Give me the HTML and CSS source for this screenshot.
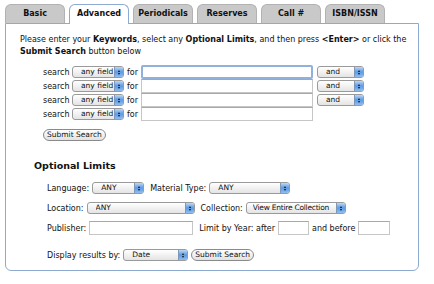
FILE: index.html
```html
<!DOCTYPE html>
<html lang="en">
<head>
    <meta charset="UTF-8">
    <title>Advanced Search</title>
    <link rel="stylesheet" href="styles.css">
</head>
<body>
    <div class="search-box">
        <ul class="tabs">
            <li><a href="#">Basic</a></li>
            <li class="active"><a href="#">Advanced</a></li>
            <li><a href="#">Periodicals</a></li>
            <li><a href="#">Reserves</a></li>
            <li><a href="#">Call #</a></li>
            <li><a href="#">ISBN/ISSN</a></li>
        </ul>

        <div class="panel">
            <p class="intro">Please enter your <b>Keywords</b>, select any <b>Optional Limits</b>, and then press <b>&lt;Enter&gt;</b> or click the <b>Submit Search</b> button below</p>

            <div class="keywords">
                <div class="kw-row">
                    <span>search</span>
                    <span class="sel w52"><select><option>any field</option></select><i class="cap"></i></span>
                    <span>for</span>
                    <input type="text" class="kw-input focus">
                    <span class="sel w47"><select><option>and</option></select><i class="cap"></i></span>
                </div>
                <div class="kw-row">
                    <span>search</span>
                    <span class="sel w52"><select><option>any field</option></select><i class="cap"></i></span>
                    <span>for</span>
                    <input type="text" class="kw-input">
                    <span class="sel w47"><select><option>and</option></select><i class="cap"></i></span>
                </div>
                <div class="kw-row">
                    <span>search</span>
                    <span class="sel w52"><select><option>any field</option></select><i class="cap"></i></span>
                    <span>for</span>
                    <input type="text" class="kw-input">
                    <span class="sel w47"><select><option>and</option></select><i class="cap"></i></span>
                </div>
                <div class="kw-row">
                    <span>search</span>
                    <span class="sel w52"><select><option>any field</option></select><i class="cap"></i></span>
                    <span>for</span>
                    <input type="text" class="kw-input">
                </div>
                <button class="pill first-submit">Submit Search</button>
            </div>

            <h3>Optional Limits</h3>

            <div class="limits">
                <div class="lim-row">
                    <span>Language:</span>
                    <span class="sel w52"><select><option>ANY</option></select><i class="cap"></i></span>
                    <span class="gap">Material Type:</span>
                    <span class="sel w81"><select><option>ANY</option></select><i class="cap"></i></span>
                </div>
                <div class="lim-row">
                    <span>Location:</span>
                    <span class="sel w108"><select><option>ANY</option></select><i class="cap"></i></span>
                    <span class="gap">Collection:</span>
                    <span class="sel w100 tight"><select><option>View Entire Collection</option></select><i class="cap"></i></span>
                </div>
                <div class="lim-row">
                    <span>Publisher:</span>
                    <input type="text" class="box w104">
                    <span class="gap">Limit by Year: after</span>
                    <input type="text" class="box w31">
                    <span>and before</span>
                    <input type="text" class="box w32">
                </div>
                <div class="lim-row display-row">
                    <span>Display results by:</span>
                    <span class="sel w65"><select><option>Date</option></select><i class="cap"></i></span>
                    <button class="pill">Submit Search</button>
                </div>
            </div>
        </div>
    </div>
</body>
</html>
```

FILE: styles.css
```css
* { box-sizing: border-box; }

body {
    margin: 0;
    font-family: "DejaVu Sans", Verdana, sans-serif;
    font-size: 8px;
    color: #111;
    background: #fff;
}

.search-box {
    width: 414px;
    margin: 4px 0 0 5px;
}

/* tabs */
.tabs {
    display: flex;
    gap: 4px;
    list-style: none;
    margin: 0;
    padding: 0;
    height: 19px;
}
.tabs li {
    width: 60px;
    height: 19px;
    background: #c9c9c9;
    border: 1px solid #b2b2b2;
    border-bottom: none;
    border-radius: 6px 6px 0 0;
    text-align: center;
}
.tabs a {
    display: block;
    color: #111;
    font-weight: bold;
    font-size: 8px;
    line-height: 18px;
    text-decoration: none;
}
.tabs li.active {
    background: #fff;
    border-color: #8daad0;
    height: 20px;
    position: relative;
    z-index: 1;
}

/* main panel */
.panel {
    height: 248px;
    border: 1px solid #8daad0;
    border-radius: 0 0 6px 6px;
    padding: 10px 6px 0 14px;
}
.intro {
    margin: 0;
    line-height: 12px;
}

.keywords {
    margin: 7px 0 0 23px;
}
.kw-row {
    display: flex;
    align-items: center;
    height: 14px;
}
.kw-row > span:first-child { width: 29px; }
.kw-row > span:nth-child(3) { margin: 0 3px; }
.kw-input {
    width: 172px;
    height: 14px;
    border: 1px solid #c6c6c6;
    border-top-color: #a8a8a8;
    margin: 0 4px 0 0;
    padding: 0;
}
.kw-input.focus {
    border: 2px solid #8fb1dc;
    border-radius: 2px;
}
.first-submit {
    margin-top: 8px;
}

/* faux aqua popups */
.sel {
    display: inline-flex;
    height: 12px;
    border: 1px solid #9a9a9a;
    border-radius: 3px;
    background: linear-gradient(#ffffff, #e4e4e4);
    overflow: hidden;
}
.sel select {
    -webkit-appearance: none;
    appearance: none;
    flex: 1;
    min-width: 0;
    border: none;
    background: transparent;
    font-family: inherit;
    font-size: 7.5px;
    color: #111;
    padding: 0 0 0 8px;
    height: 10px;
    line-height: 10px;
}
.sel.tight select {
    padding-left: 6px;
    letter-spacing: -0.25px;
}
.sel .cap {
    width: 9px;
    background: linear-gradient(#bcd7f5, #5b9ae3 50%, #8fbdf0);
    border-left: 1px solid #7e98b8;
    display: flex;
    flex-direction: column;
    align-items: center;
    justify-content: center;
    gap: 1px;
}
.sel .cap::before,
.sel .cap::after {
    content: "";
    border-left: 1.5px solid transparent;
    border-right: 1.5px solid transparent;
}
.sel .cap::before { border-bottom: 2px solid #111; }
.sel .cap::after { border-top: 2px solid #111; }

.w47 { width: 47px; }
.w52 { width: 52px; }
.w65 { width: 65px; }
.w81 { width: 81px; }
.w100 { width: 100px; }
.w108 { width: 108px; }

.pill {
    height: 12px;
    padding: 0 3px;
    border: 1px solid #8a8a8a;
    border-radius: 6px;
    background: linear-gradient(#ffffff, #e2e2e2);
    font-family: inherit;
    font-size: 7.5px;
    color: #111;
    line-height: 10px;
}

h3 {
    font-size: 9.5px;
    margin: 19px 0 0 14px;
}

.limits {
    margin: 10px 0 0 27px;
}
.lim-row {
    display: flex;
    align-items: center;
    gap: 3px;
    height: 14px;
    margin-bottom: 6px;
}
.lim-row .gap { margin-left: 3px; }
.box {
    height: 14px;
    border: 1px solid #c6c6c6;
    border-top-color: #a8a8a8;
    padding: 0;
}
.w104 { width: 104px; }
.w31 { width: 31px; }
.w32 { width: 32px; }
.display-row { margin-top: 13px; }
```
